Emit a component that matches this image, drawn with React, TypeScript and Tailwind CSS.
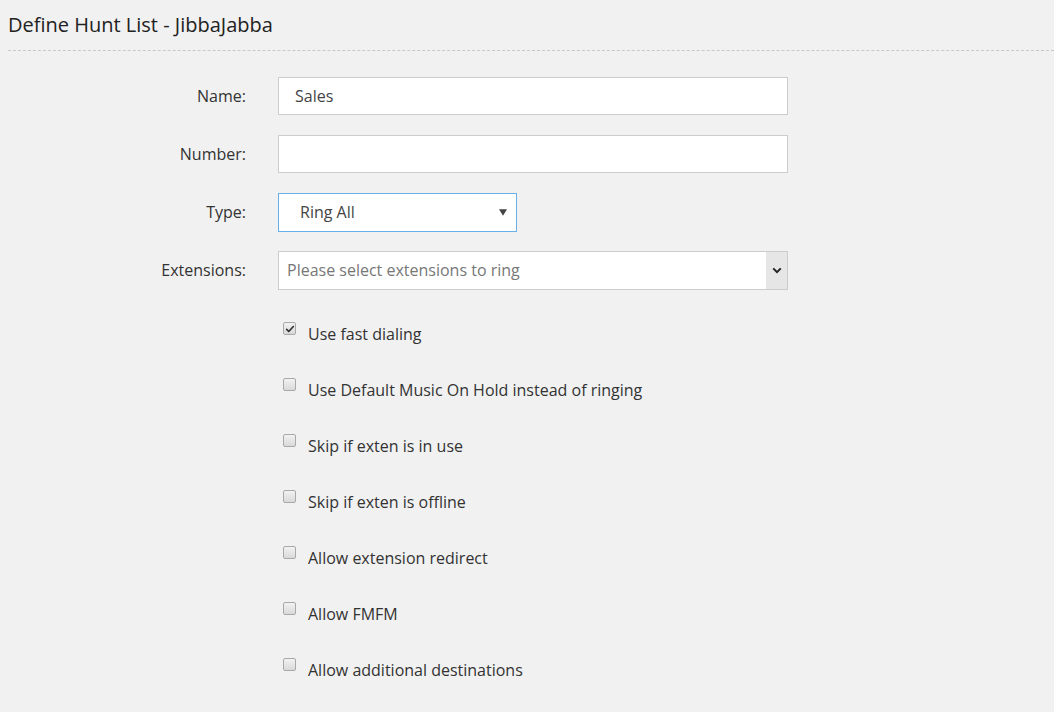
import { useState } from 'react'

const OPTIONS = [
  { key: 'fast', label: 'Use fast dialing', checked: true },
  { key: 'moh', label: 'Use Default Music On Hold instead of ringing', checked: false },
  { key: 'inuse', label: 'Skip if exten is in use', checked: false },
  { key: 'offline', label: 'Skip if exten is offline', checked: false },
  { key: 'redirect', label: 'Allow extension redirect', checked: false },
  { key: 'fmfm', label: 'Allow FMFM', checked: false },
  { key: 'dest', label: 'Allow additional destinations', checked: false },
]

function Checkbox({ checked, onClick }: { checked: boolean; onClick: () => void }) {
  return (
    <button
      type="button"
      onClick={onClick}
      className="w-[13px] h-[13px] rounded-[2px] border border-[#a9a9a9] bg-gradient-to-b from-[#f2f2f2] to-[#d9d9d9] flex items-center justify-center shrink-0"
    >
      {checked && (
        <svg viewBox="0 0 12 12" className="w-[10px] h-[10px]">
          <path d="M2 6.5l2.5 2.5L10 3" fill="none" stroke="#333" strokeWidth={2} strokeLinecap="round" strokeLinejoin="round" />
        </svg>
      )}
    </button>
  )
}

export default function App() {
  const [name, setName] = useState('Sales')
  const [number, setNumber] = useState('')
  const [checks, setChecks] = useState<Record<string, boolean>>(
    Object.fromEntries(OPTIONS.map((o) => [o.key, o.checked]))
  )

  return (
    <div className="min-h-[712px] bg-[#f1f1f1] text-[#333] font-['Open_Sans',sans-serif]">
      {/* Header */}
      <div className="ml-2 pt-3 pb-3 border-b border-dashed border-[#c8c8c8]">
        <h1 className="text-[20px] leading-[26px] text-[#222]">Define Hunt List - JibbaJabba</h1>
      </div>

      {/* Form */}
      <div className="pt-[26px]">
        <div className="flex flex-col gap-5">
          <div className="h-[38px] flex items-center">
            <label className="w-[246px] text-right text-[16px]">Name:</label>
            <input
              value={name}
              onChange={(e) => setName(e.target.value)}
              className="ml-8 w-[510px] h-[38px] bg-white border border-[#cccccc] px-4 text-[16px] text-[#444] outline-none"
            />
          </div>
          <div className="h-[38px] flex items-center">
            <label className="w-[246px] text-right text-[16px]">Number:</label>
            <input
              value={number}
              onChange={(e) => setNumber(e.target.value)}
              className="ml-8 w-[510px] h-[38px] bg-white border border-[#cccccc] px-4 text-[16px] text-[#444] outline-none"
            />
          </div>
          <div className="h-[38px] flex items-center">
            <label className="w-[246px] text-right text-[16px]">Type:</label>
            <div className="ml-8 w-[239px] h-[39px] bg-white border border-[#66afe9] flex items-center justify-between pl-[21px] pr-[9px]">
              <span className="text-[16px] text-[#444]">Ring All</span>
              <svg viewBox="0 0 10 8" className="w-[8px] h-[7px]">
                <path d="M0 0h10L5 8z" fill="#444" />
              </svg>
            </div>
          </div>
          <div className="h-[38px] flex items-center">
            <label className="w-[246px] text-right text-[16px]">Extensions:</label>
            <div className="ml-8 w-[510px] h-[39px] bg-white border border-[#cccccc] flex items-stretch">
              <span className="flex-1 flex items-center pl-2 text-[16px] text-[#777]">Please select extensions to ring</span>
              <div className="w-[21px] bg-[#e6e6e6] flex items-center justify-center">
                <svg viewBox="0 0 12 8" className="w-[10px] h-[7px]">
                  <path d="M1.5 1.5L6 6l4.5-4.5" fill="none" stroke="#222" strokeWidth={2.4} />
                </svg>
              </div>
            </div>
          </div>
        </div>

        {/* Options */}
        <div className="mt-[17px] flex flex-col">
          {OPTIONS.map((o) => (
            <div key={o.key} className="h-[56px] flex items-center pl-[283px]">
              <div className="-mt-[11px]">
                <Checkbox
                  checked={checks[o.key]}
                  onClick={() => setChecks({ ...checks, [o.key]: !checks[o.key] })}
                />
              </div>
              <span className="ml-3 text-[16px] text-[#333]">{o.label}</span>
            </div>
          ))}
        </div>
      </div>
    </div>
  )
}
